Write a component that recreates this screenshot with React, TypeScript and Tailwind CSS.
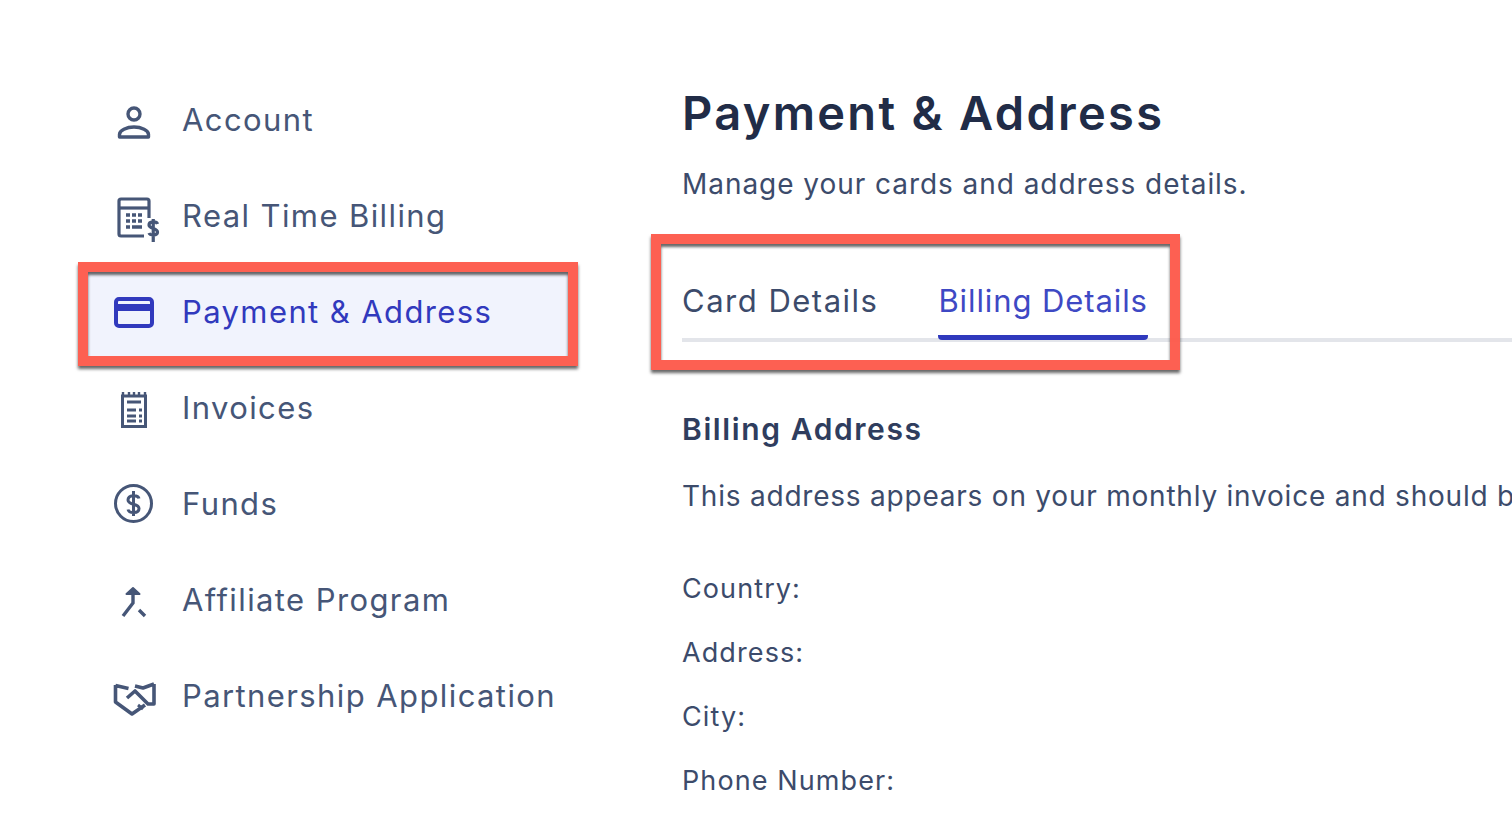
import type { ReactNode } from "react";

const iconProps = {
  fill: "none",
  stroke: "currentColor",
  viewBox: "0 0 44 44",
  className: "w-11 h-11 shrink-0 overflow-visible",
};

function AccountIcon() {
  return (
    <svg {...iconProps}>
      <circle cx="22" cy="16" r="6" strokeWidth="3.4" />
      <path d="M7.500 39v-2.500c0-4 7-7.500 14.500-7.500s14.500 3.500 14.500 7.500v2.500z" strokeWidth="3.400" strokeLinejoin="round" />
    </svg>
  );
}

function BillingIcon() {
  return (
    <svg {...iconProps}>
      <path d="M32 42H9a2 2 0 0 1-2-2V7a2 2 0 0 1 2-2h26a2 2 0 0 1 2 2v17" strokeWidth="3.200" />
      <path d="M7 14h30" strokeWidth="3.200" />
      <path d="M14 21h4M20 21h4M26 21h4M14 27h4M20 27h4M26 27h4M14 33h4M20 33h10" strokeWidth="3.600" />
      <path d="M45.500 30c-1-3-8.500-3-8.500 1s8.500 3 8.500 7-7.500 3.500-8.500 1M41.250 25v23" strokeWidth="3.200" />
    </svg>
  );
}

function CardIcon() {
  return (
    <svg {...iconProps}>
      <rect x="4" y="9" width="36" height="27" rx="3" strokeWidth="4" />
      <path d="M4 17.500h36" strokeWidth="7" />
    </svg>
  );
}

function InvoiceIcon() {
  return (
    <svg {...iconProps}>
      <path d="M10.500 10h23v30.500h-23z" strokeWidth="3" />
      <path d="M11 6v4M17 6v4M22 6v4M27 6v4M33 6v4" strokeWidth="2.400" />
      <path d="M15 16h14M15 24h9M27 24h3M15 30h9M27 30h3M15 35h9M27 35h3" strokeWidth="2.800" />
    </svg>
  );
}

function FundsIcon() {
  return (
    <svg {...iconProps}>
      <circle cx="21.500" cy="21.500" r="18" strokeWidth="3" />
      <path d="M27 16.500c-1-4-11-4-11 1.500s11 3 11 8.500-10 5-11 1M21.500 9v25" strokeWidth="3" />
    </svg>
  );
}

function AffiliateIcon() {
  return (
    <svg {...iconProps}>
      <path d="M14.500 16l6.500-6 6.500 6z" fill="currentColor" strokeWidth="2" strokeLinejoin="round" />
      <path d="M21 15v10L11 38M27 32l6 6" strokeWidth="3.400" />
    </svg>
  );
}

function HandshakeIcon() {
  return (
    <svg {...iconProps}>
      <path d="M3.500 11.500l13 3M3.500 11v17L20 40l13-9" strokeWidth="3.600" strokeLinejoin="round" />
      <path d="M42 10v20h-6L23 17l-8 7M23 12l8 2 11-4" strokeWidth="3.600" strokeLinejoin="round" />
      <path d="M26 31l5 4" strokeWidth="3" />
    </svg>
  );
}

function NavRow({ icon, label, active }: { icon: ReactNode; label: string; active?: boolean }) {
  return (
    <div
      className={
        active
          ? "h-24 flex items-center gap-[26px] pl-[24px] text-[#3139bd] bg-[#f1f3fd]"
          : "h-24 flex items-center gap-[26px] pl-[24px] text-[#465677]"
      }
    >
      {icon}
      <span className="text-[31px] tracking-[1.4px]">{label}</span>
    </div>
  );
}

export default function App() {
  return (
    <div className="relative w-[1512px] h-[818px] overflow-hidden bg-white flex font-['Inter',sans-serif] text-[#3c4b6b]">
      <aside className="w-[480px] ml-[88px] mt-[72px] shrink-0">
        <NavRow icon={<AccountIcon />} label="Account" />
        <NavRow icon={<BillingIcon />} label="Real Time Billing" />
        <NavRow icon={<CardIcon />} label="Payment & Address" active />
        <NavRow icon={<InvoiceIcon />} label="Invoices" />
        <NavRow icon={<FundsIcon />} label="Funds" />
        <NavRow icon={<AffiliateIcon />} label="Affiliate Program" />
        <NavRow icon={<HandshakeIcon />} label="Partnership Application" />
      </aside>

      <main className="ml-[114px] flex-1 min-w-0 pt-[84px]">
        <h1 className="text-[47px] leading-[58px] font-semibold tracking-[2.3px] text-[#212c47]">Payment &amp; Address</h1>
        <p className="mt-[27px] text-[28px] leading-[30px] tracking-[0.95px] whitespace-nowrap">
          Manage your cards and address details.
        </p>

        <div className="mt-[82px] h-[61px] flex gap-[60px] border-b-[4px] border-[#e3e5ea] text-[31px] leading-[40px]">
          <div className="h-[59px] tracking-[1.5px]">Card Details</div>
          <div className="h-[59px] tracking-[0.9px] text-[#3e49c4] border-b-[5px] border-[#2f39bd] rounded-b-sm">
            Billing Details
          </div>
        </div>

        <h2 className="mt-[67px] text-[30px] leading-[40px] font-semibold tracking-[1.6px] text-[#2f3d5e]">Billing Address</h2>
        <p className="mt-[32px] text-[28px] leading-[30px] tracking-[0.78px] whitespace-nowrap">
          This address appears on your monthly invoice and should be the legal address of your home or business
        </p>

        <div className="mt-[63px] flex flex-col gap-[34px] text-[27px] leading-[30px] tracking-[1.1px]">
          <div>Country:</div>
          <div>Address:</div>
          <div>City:</div>
          <div>Phone Number:</div>
        </div>
      </main>

      {/* red annotation boxes drawn over the screenshot */}
      <div className="absolute left-[78px] top-[262px] w-[500px] h-[104px] border-[10px] border-[#fd5749]/95 shadow-[0_3px_3px_rgba(0,0,0,0.6),inset_0_3px_3px_rgba(0,0,0,0.6)]" />
      <div className="absolute left-[651px] top-[234px] w-[529px] h-[136px] border-[10px] border-[#fd5749]/95 shadow-[0_3px_3px_rgba(0,0,0,0.6),inset_0_3px_3px_rgba(0,0,0,0.6)]" />
    </div>
  );
}
